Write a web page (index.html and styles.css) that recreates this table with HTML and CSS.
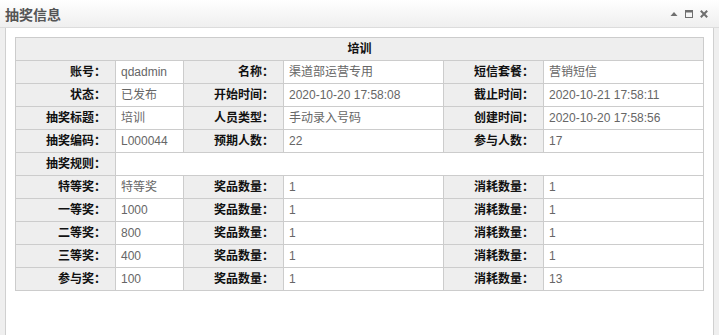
FILE: index.html
```html
<!DOCTYPE html>
<html lang="zh-CN">
<head>
    <meta charset="UTF-8">
    <meta name="viewport" content="width=device-width, initial-scale=1.0">
    <title>抽奖信息</title>
    <link rel="stylesheet" href="styles.css">
</head>
<body>
    <div class="panel">
        <!-- 标题栏 -->
        <div class="panel-header">
            <span class="panel-title">抽奖信息</span>
            <div class="panel-tools">
                <svg class="tool" width="10" height="10" viewBox="0 0 10 10"><path d="M1.5 7 L5 3 L8.5 7 Z" fill="#6f6f6f"/></svg>
                <svg class="tool" width="10" height="10" viewBox="0 0 10 10"><rect x="1.5" y="1.5" width="7" height="7" fill="none" stroke="#6f6f6f" stroke-width="1"/><rect x="1" y="1" width="8" height="2.5" fill="#6f6f6f"/></svg>
                <svg class="tool" width="10" height="10" viewBox="0 0 10 10"><path d="M1.8 1.8 L8.2 8.2 M8.2 1.8 L1.8 8.2" stroke="#6f6f6f" stroke-width="2"/></svg>
            </div>
        </div>

        <!-- 内容 -->
        <div class="panel-body">
            <table class="info-table">
                <colgroup>
                    <col class="c-label">
                    <col class="c-short">
                    <col class="c-label">
                    <col class="c-long">
                    <col class="c-label">
                    <col class="c-long">
                </colgroup>
                <tr>
                    <th class="caption" colspan="6">培训</th>
                </tr>
                <tr>
                    <th>账号：</th><td>qdadmin</td>
                    <th>名称：</th><td>渠道部运营专用</td>
                    <th>短信套餐：</th><td>营销短信</td>
                </tr>
                <tr>
                    <th>状态：</th><td>已发布</td>
                    <th>开始时间：</th><td>2020-10-20 17:58:08</td>
                    <th>截止时间：</th><td>2020-10-21 17:58:11</td>
                </tr>
                <tr>
                    <th>抽奖标题：</th><td>培训</td>
                    <th>人员类型：</th><td>手动录入号码</td>
                    <th>创建时间：</th><td>2020-10-20 17:58:56</td>
                </tr>
                <tr>
                    <th>抽奖编码：</th><td>L000044</td>
                    <th>预期人数：</th><td>22</td>
                    <th>参与人数：</th><td>17</td>
                </tr>
                <tr>
                    <th>抽奖规则：</th><td colspan="5"></td>
                </tr>
                <!-- 奖项 -->
                <tr>
                    <th>特等奖：</th><td>特等奖</td>
                    <th>奖品数量：</th><td>1</td>
                    <th>消耗数量：</th><td>1</td>
                </tr>
                <tr>
                    <th>一等奖：</th><td>1000</td>
                    <th>奖品数量：</th><td>1</td>
                    <th>消耗数量：</th><td>1</td>
                </tr>
                <tr>
                    <th>二等奖：</th><td>800</td>
                    <th>奖品数量：</th><td>1</td>
                    <th>消耗数量：</th><td>1</td>
                </tr>
                <tr>
                    <th>三等奖：</th><td>400</td>
                    <th>奖品数量：</th><td>1</td>
                    <th>消耗数量：</th><td>1</td>
                </tr>
                <tr>
                    <th>参与奖：</th><td>100</td>
                    <th>奖品数量：</th><td>1</td>
                    <th>消耗数量：</th><td>13</td>
                </tr>
            </table>
        </div>
    </div>
</body>
</html>
```

FILE: styles.css
```css
/* 通用 */
body {
    margin: 0;
    padding: 0;
    background-color: #efefef;
    font-family: Arial, "Liberation Sans", "Noto Sans CJK SC", sans-serif;
    font-size: 12px;
}

.panel {
    height: 335px;
    overflow: hidden;
}

/* 标题栏 */
.panel-header {
    height: 27px;
    display: flex;
    align-items: center;
    justify-content: space-between;
    padding: 0 10px 0 5px;
    background: linear-gradient(#ffffff, #efefef);
    border-bottom: 1px solid #dcdcdc;
}

.panel-title {
    font-size: 14px;
    font-weight: bold;
    color: #555;
}

.panel-tools {
    display: flex;
    align-items: center;
    gap: 5px;
}

.tool {
    display: block;
}

/* 内容区 */
.panel-body {
    margin: 0 5px;
    padding: 9px 9px;
    background-color: #fff;
    border: 1px solid #d0d0d0;
    border-top: none;
    height: 400px;
}

.info-table {
    width: 689px;
    border-collapse: collapse;
    table-layout: fixed;
    border: 1px solid #cccccc;
}

.c-label { width: 100px; }
.c-short { width: 68px; }
.c-long { width: 160px; }

.info-table th,
.info-table td {
    height: 22px;
    padding: 0 5px;
    border: 1px solid #cccccc;
    line-height: 22px;
    white-space: nowrap;
    box-sizing: border-box;
}

.info-table th {
    background-color: #eeeeee;
    color: #111;
    text-align: right;
    padding-right: 9px;
}

.info-table th.caption {
    text-align: center;
    padding-right: 5px;
}

.info-table td {
    color: #666;
    text-align: left;
}
```
